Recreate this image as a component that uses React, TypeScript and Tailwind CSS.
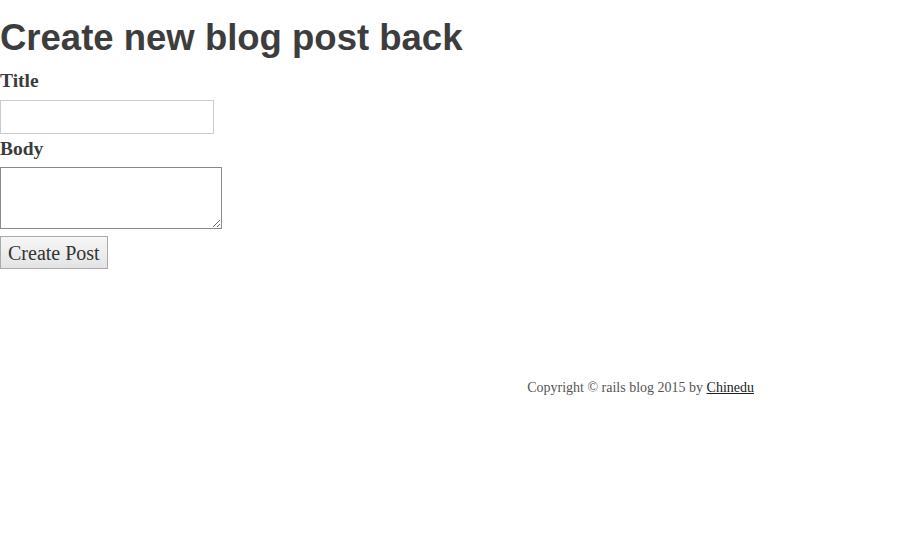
import React from 'react';

export default function App() {
  return (
    <div className="w-[920px] h-[556px] bg-white text-[#3b3b3b] font-['Liberation_Serif',serif]">
      <h1 className="m-0 pt-[16px] text-[36.5px] leading-[44px] font-bold font-['Liberation_Sans',Arial,sans-serif] text-[#3d3d3d]">
        Create new blog post back
      </h1>

      <form className="flex flex-col items-start">
        <label className="text-[19.5px] leading-[22px] font-bold mt-[10px]">Title</label>
        <input
          type="text"
          className="mt-[8px] w-[214px] h-[34px] border border-[#cccccc] bg-white outline-none"
        />
        <label className="text-[19.5px] leading-[22px] font-bold mt-[4px]">Body</label>
        <textarea className="mt-[7px] w-[222px] h-[62px] border border-[#8a8a8a] bg-white outline-none resize" />
        <button
          type="button"
          className="mt-[7px] h-[33px] px-[7px] border border-[#aaaaaa] bg-gradient-to-b from-[#f6f6f6] to-[#e4e4e4] text-[20px] leading-[24px] text-[#333]"
        >
          Create Post
        </button>
      </form>

      <footer className="mt-[108px] flex justify-end pr-[166px] text-[14px] text-[#555]">
        <p>
          Copyright © rails blog 2015 by{' '}
          <a href="#" className="underline text-[#222]">Chinedu</a>
        </p>
      </footer>
    </div>
  );
}
